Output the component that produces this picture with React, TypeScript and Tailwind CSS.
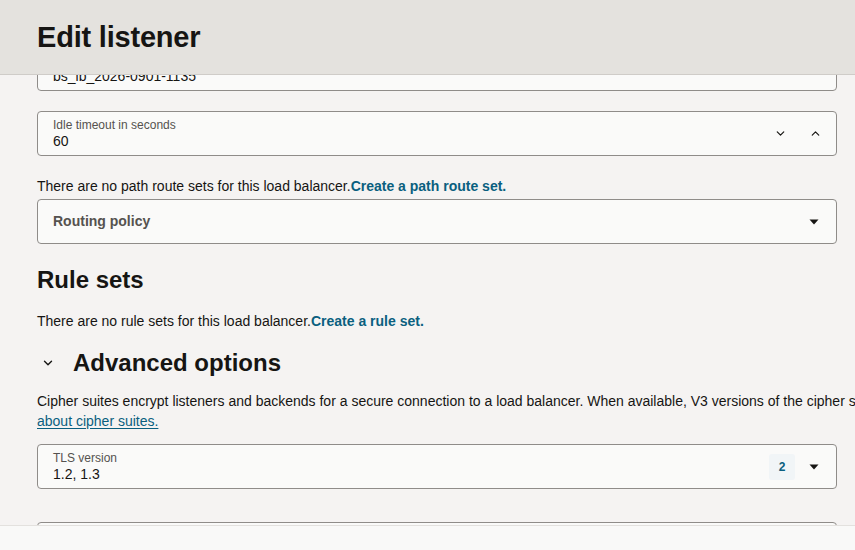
import { ChevronDown, ChevronUp } from "lucide-react";

const FONT = { fontFamily: '"Liberation Sans", Arial, sans-serif' };

function Caret() {
  return (
    <svg width="10" height="6" viewBox="0 0 10 6" className="text-[#161513]">
      <path d="M0.5 0.5h9L5 5.5z" fill="currentColor" />
    </svg>
  );
}

function Field({
  label,
  value,
  right,
}: {
  label?: string;
  value?: string;
  right?: React.ReactNode;
}) {
  return (
    <div className="flex h-[45px] items-center rounded-[4px] border border-[#8f8c89] bg-[#fafaf9] pl-[15px] pr-[14px]">
      <div className="flex min-w-0 flex-1 flex-col justify-center">
        {label && (
          <span className="text-[12px] leading-[14px] text-[#55524f]">
            {label}
          </span>
        )}
        {value && (
          <span className="text-[14px] leading-[18px] text-[#161513]">
            {value}
          </span>
        )}
      </div>
      {right}
    </div>
  );
}

export default function App() {
  return (
    <div
      className="flex h-[550px] w-[855px] flex-col overflow-hidden bg-[#f5f3f2] text-[#161513]"
      style={FONT}
    >
      <header className="z-10 flex h-[75px] shrink-0 items-center border-b border-[#cfccc8] bg-[#e4e2de] px-[37px]">
        <h1 className="text-[29px] font-bold leading-none tracking-[-0.2px]">
          Edit listener
        </h1>
      </header>

      <main className="flex-1 overflow-hidden">
        <div className="-mt-[29px] w-[900px] pl-[37px]">
          <div className="w-[800px]">
            <Field label="Listener name" value="bs_lb_2026-0901-1135" />
          </div>

          <div className="mt-[20px] w-[800px]">
            <Field
              label="Idle timeout in seconds"
              value="60"
              right={
                <div className="flex items-center gap-[22px] text-[#161513]">
                  <ChevronDown size={13} strokeWidth={2.2} />
                  <ChevronUp size={13} strokeWidth={2.2} />
                </div>
              }
            />
          </div>

          <p className="mt-[20px] text-[14px] leading-[20px]">
            There are no path route sets for this load balancer.
            <a className="font-semibold text-[#0a5f7f]">
              Create a path route set.
            </a>
          </p>

          <div className="mt-[3px] w-[800px]">
            <div className="flex h-[45px] items-center rounded-[4px] border border-[#8f8c89] bg-[#fafaf9] pl-[15px] pr-[17px]">
              <span className="flex-1 text-[14px] font-semibold text-[#55524f]">
                Routing policy
              </span>
              <Caret />
            </div>
          </div>

          <h2 className="mt-[20px] text-[24px] font-bold leading-[32px]">
            Rule sets
          </h2>

          <p className="mt-[15px] text-[14px] leading-[20px]">
            There are no rule sets for this load balancer.
            <a className="font-semibold text-[#0a5f7f]">Create a rule set.</a>
          </p>

          <div className="mt-[16px] flex items-center">
            <span className="flex w-[36px] items-center pl-[4px]">
              <ChevronDown size={14} strokeWidth={2.4} />
            </span>
            <h2 className="text-[24px] font-bold leading-[32px]">
              Advanced options
            </h2>
          </div>

          <p className="mt-[12px] text-[14px] leading-[20px]">
            <span className="whitespace-nowrap">
              Cipher suites encrypt listeners and backends for a secure
              connection to a load balancer. When available, V3 versions of the
              cipher suites are recommended. Learn more
            </span>
            <br />
            <a className="text-[#0a5f7f] underline underline-offset-2">
              about cipher suites.
            </a>
          </p>

          <div className="mt-[13px] w-[800px]">
            <Field
              label="TLS version"
              value="1.2, 1.3"
              right={
                <div className="flex items-center gap-[14px]">
                  <span className="flex h-[26px] w-[26px] items-center justify-center rounded-[3px] bg-[#f1f5f7] text-[12px] font-semibold text-[#0a5f7f]">
                    2
                  </span>
                  <span className="pr-[3px]">
                    <Caret />
                  </span>
                </div>
              }
            />
          </div>

          <div className="mt-[33px] w-[800px]">
            <Field label="Cipher suite" value="oci-default-http2-ssl-cipher-suite-v1" />
          </div>
        </div>
      </main>

      <footer className="h-[25px] shrink-0 border-t border-[#e3e1de] bg-[#f9f9f8]" />
    </div>
  );
}
